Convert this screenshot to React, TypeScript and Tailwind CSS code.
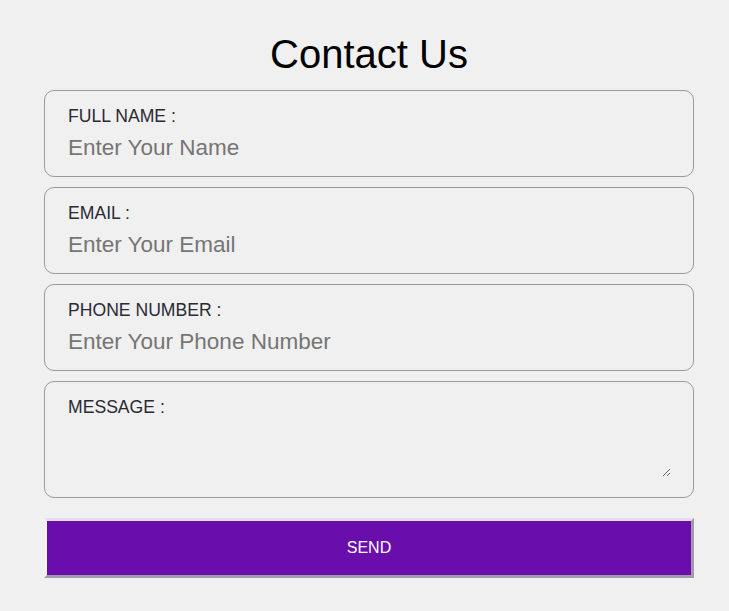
import { useState } from 'react';

const FIELDS = [
  { id: 'name', label: 'FULL NAME :', placeholder: 'Enter Your Name', type: 'text' },
  { id: 'email', label: 'EMAIL :', placeholder: 'Enter Your Email', type: 'email' },
  { id: 'phone', label: 'PHONE NUMBER :', placeholder: 'Enter Your Phone Number', type: 'tel' },
];

export default function App() {
  const [values, setValues] = useState<Record<string, string>>({});

  return (
    <div className="min-h-screen bg-[#f0f0f0] pt-[31px] font-['Liberation_Sans',Arial,sans-serif]">
      <form
        onSubmit={(e) => e.preventDefault()}
        className="ml-[44px] flex w-[650px] flex-col"
      >
        <h1 className="mb-[13px] text-center text-[40px] leading-[46px] text-black">Contact Us</h1>

        <div className="flex flex-col gap-[10px]">
          {FIELDS.map((f) => (
            <div key={f.id} className="flex h-[87px] flex-col rounded-[10px] border border-[#9a9a9a] px-[23px] pt-[15px]">
              <label htmlFor={f.id} className="text-[17.6px] leading-[20px] text-[#2a2a33]">
                {f.label}
              </label>
              <input
                id={f.id}
                type={f.type}
                value={values[f.id] ?? ''}
                onChange={(e) => setValues({ ...values, [f.id]: e.target.value })}
                placeholder={f.placeholder}
                className="mt-[9px] h-[26px] bg-transparent text-[22.5px] leading-[26px] text-[#222] placeholder:text-[#757575] focus:outline-none"
              />
            </div>
          ))}

          {/* Message */}
          <div className="flex h-[117px] flex-col rounded-[10px] border border-[#9a9a9a] pl-[23px] pr-[22px] pt-[15px]">
            <label htmlFor="message" className="text-[17.6px] leading-[20px] text-[#2a2a33]">
              MESSAGE :
            </label>
            <textarea
              id="message"
              value={values.message ?? ''}
              onChange={(e) => setValues({ ...values, message: e.target.value })}
              className="mt-[9px] h-[51px] resize-y bg-transparent text-[18px] text-[#222] focus:outline-none"
            />
          </div>
        </div>

        <button
          type="submit"
          className="mt-[20px] h-[60px] w-full border-[3px] border-b-[#a39ca8] border-l-[#f4f4f4] border-r-[#a39ca8] border-t-[#e6dcea] bg-[#6a0dad] text-[16px] text-white"
        >
          SEND
        </button>
      </form>
    </div>
  );
}
